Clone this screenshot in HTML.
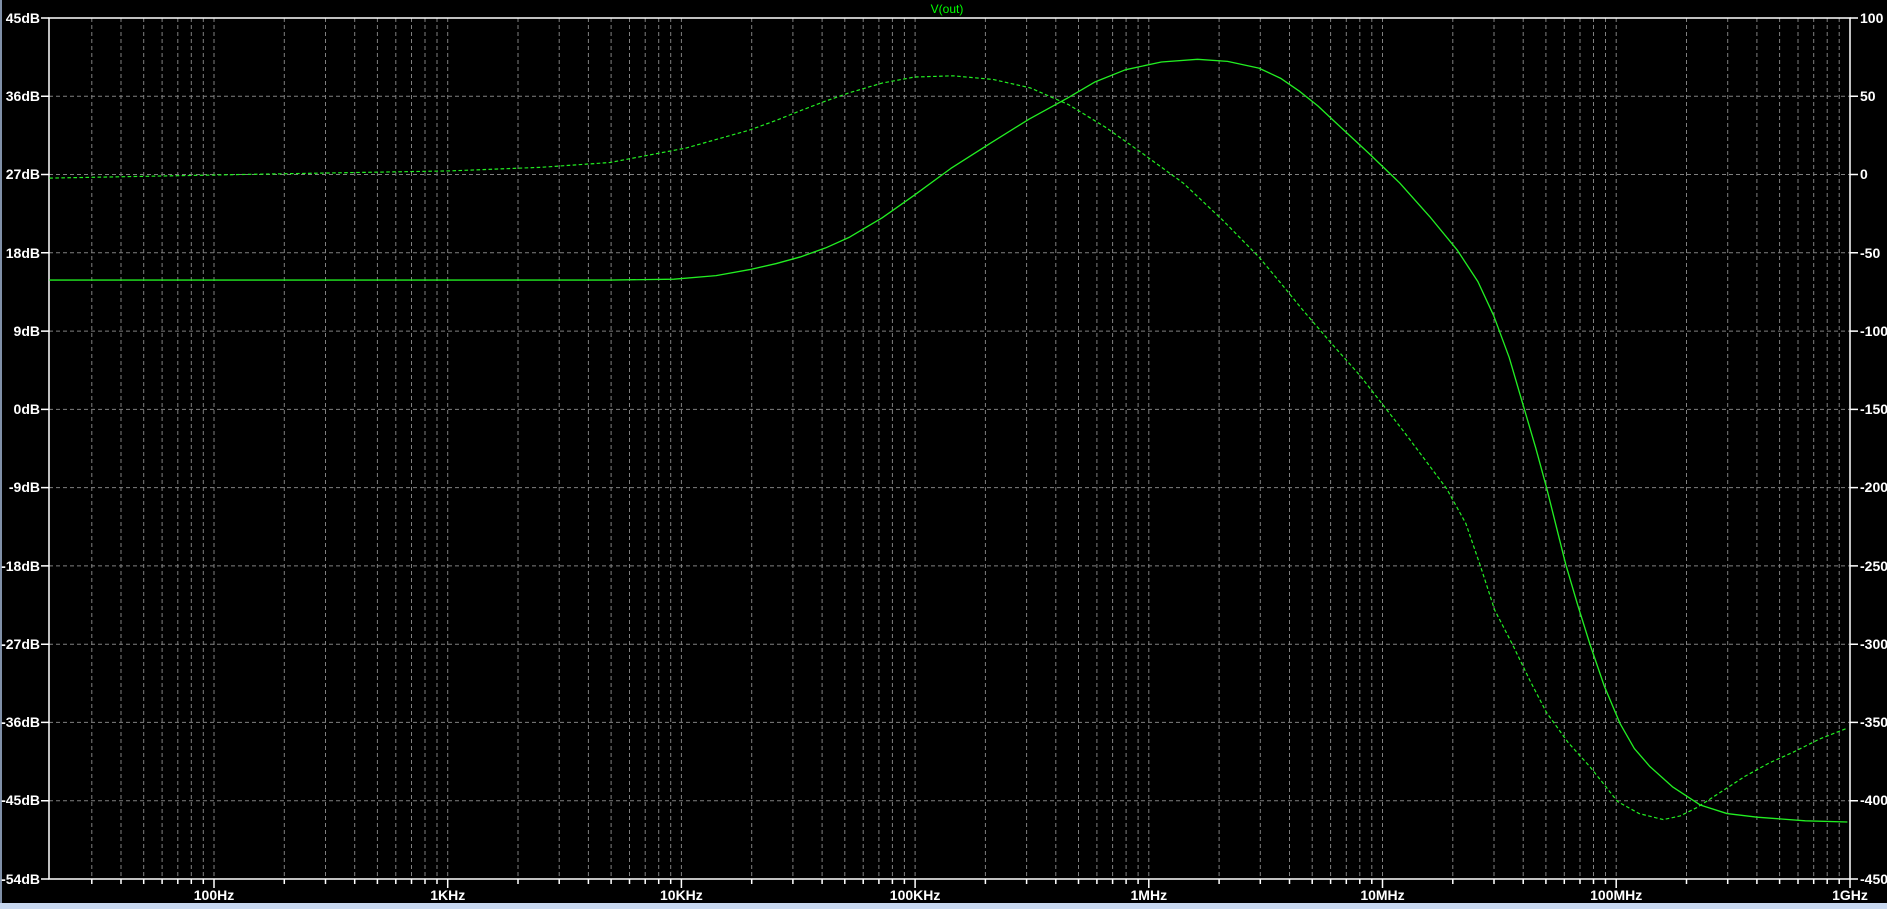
<!DOCTYPE html>
<html><head><meta charset="utf-8"><style>
html,body{margin:0;padding:0;background:#000;width:1887px;height:909px;overflow:hidden}
svg{display:block}
text{font-family:"Liberation Sans",sans-serif;font-weight:bold;font-size:14px;fill:#fff}
</style></head><body>
<svg width="1887" height="909" viewBox="0 0 1887 909" xmlns="http://www.w3.org/2000/svg">
<rect width="1887" height="909" fill="#000"/>
<rect x="0" y="0" width="2" height="909" fill="#8090a8"/>
<rect x="0" y="903" width="1887" height="6" fill="#c8d8f0"/>
<g stroke="#808080" stroke-width="1" stroke-dasharray="4,3" fill="none">
<path d="M49 96.3H1850M49 174.5H1850M49 252.8H1850M49 331.1H1850M49 409.4H1850M49 487.6H1850M49 565.9H1850M49 644.2H1850M49 722.4H1850M49 800.7H1850"/>
<path d="M91.8 18V879M121 18V879M143.7 18V879M162.1 18V879M177.8 18V879M191.3 18V879M203.3 18V879
M214 18V879M284.3 18V879M325.5 18V879M354.7 18V879M377.4 18V879M395.8 18V879M411.5 18V879M425 18V879M437 18V879
M447.7 18V879M518 18V879M559.2 18V879M588.4 18V879M611.1 18V879M629.5 18V879M645.2 18V879M658.7 18V879M670.7 18V879
M681.4 18V879M751.7 18V879M792.9 18V879M822.1 18V879M844.8 18V879M863.2 18V879M878.9 18V879M892.4 18V879M904.4 18V879
M915.1 18V879M985.4 18V879M1026.6 18V879M1055.8 18V879M1078.5 18V879M1096.9 18V879M1112.6 18V879M1126.1 18V879M1138.1 18V879
M1148.8 18V879M1219.1 18V879M1260.3 18V879M1289.5 18V879M1312.2 18V879M1330.6 18V879M1346.3 18V879M1359.8 18V879M1371.8 18V879
M1382.5 18V879M1452.8 18V879M1494 18V879M1523.2 18V879M1545.9 18V879M1564.3 18V879M1580 18V879M1593.5 18V879M1605.5 18V879
M1616.2 18V879M1686.5 18V879M1727.7 18V879M1756.9 18V879M1779.6 18V879M1798 18V879M1813.7 18V879M1827.2 18V879M1839.2 18V879"/>
</g>
<g stroke="#fff" stroke-width="1.5" fill="none">
<path d="M49 18H1850V879H49Z"/>
<path d="M41 18H49M41 96.3H49M41 174.5H49M41 252.8H49M41 331.1H49M41 409.4H49M41 487.6H49M41 565.9H49M41 644.2H49M41 722.4H49M41 800.7H49M41 879H49"/>
<path d="M1850 18H1858M1850 96.3H1858M1850 174.5H1858M1850 252.8H1858M1850 331.1H1858M1850 409.4H1858M1850 487.6H1858M1850 565.9H1858M1850 644.2H1858M1850 722.4H1858M1850 800.7H1858M1850 879H1858"/>
<path d="M214 879v9M447.7 879v9M681.4 879v9M915.1 879v9M1148.8 879v9M1382.5 879v9M1616.2 879v9M1850 879v9"/>
<path d="M91.8 879v5M121 879v5M143.7 879v5M162.1 879v5M177.8 879v5M191.3 879v5M203.3 879v5M284.3 879v5M325.5 879v5M354.7 879v5M377.4 879v5M395.8 879v5M411.5 879v5M425 879v5M437 879v5M518 879v5M559.2 879v5M588.4 879v5M611.1 879v5M629.5 879v5M645.2 879v5M658.7 879v5M670.7 879v5M751.7 879v5M792.9 879v5M822.1 879v5M844.8 879v5M863.2 879v5M878.9 879v5M892.4 879v5M904.4 879v5M985.4 879v5M1026.6 879v5M1055.8 879v5M1078.5 879v5M1096.9 879v5M1112.6 879v5M1126.1 879v5M1138.1 879v5M1219.1 879v5M1260.3 879v5M1289.5 879v5M1312.2 879v5M1330.6 879v5M1346.3 879v5M1359.8 879v5M1371.8 879v5M1452.8 879v5M1494 879v5M1523.2 879v5M1545.9 879v5M1564.3 879v5M1580 879v5M1593.5 879v5M1605.5 879v5M1686.5 879v5M1727.7 879v5M1756.9 879v5M1779.6 879v5M1798 879v5M1813.7 879v5M1827.2 879v5M1839.2 879v5"/>
</g>
<g text-anchor="end">
<text x="40" y="23">45dB</text><text x="40" y="101">36dB</text><text x="40" y="179">27dB</text><text x="40" y="258">18dB</text>
<text x="40" y="336">9dB</text><text x="40" y="414">0dB</text><text x="40" y="492">-9dB</text><text x="40" y="571">-18dB</text>
<text x="40" y="649">-27dB</text><text x="40" y="727">-36dB</text><text x="40" y="805">-45dB</text><text x="40" y="884">-54dB</text>
</g>
<g>
<text x="1860" y="23">100</text><text x="1860" y="101">50</text><text x="1860" y="179">0</text><text x="1860" y="258">-50</text>
<text x="1860" y="336">-100</text><text x="1860" y="414">-150</text><text x="1860" y="492">-200</text><text x="1860" y="571">-250</text>
<text x="1860" y="649">-300</text><text x="1860" y="727">-350</text><text x="1860" y="805">-400</text><text x="1860" y="884">-450</text>
</g>
<g text-anchor="middle">
<text x="214" y="900">100Hz</text><text x="447.7" y="900">1KHz</text><text x="681.4" y="900">10KHz</text><text x="915.1" y="900">100KHz</text>
<text x="1148.8" y="900">1MHz</text><text x="1382.5" y="900">10MHz</text><text x="1616.2" y="900">100MHz</text><text x="1850" y="900">1GHz</text>
</g>
<text x="947" y="13" text-anchor="middle" style="fill:#00ff00;font-weight:normal;font-size:12px">V(out)</text>
<g transform="scale(1.2035)" fill="none" stroke="#22ee22" stroke-linejoin="round">
<polyline stroke-width="1.1" points="41,232.7 507,232.7 560,232 595,229 623,224 645,219 665,213.5 686,206 706,197 733,181 760,162 790,140 823,119 855,99 887,81.5 910,68 935,58 965,51.5 995,49.3 1020,51 1046,56.6 1064,65 1080,76 1095,88 1110,102 1137,127 1163,152 1188,180 1211,208 1228,234 1241,262 1254,297 1266,338 1276,372 1285,405 1293,437 1301,469 1311,503 1321,535 1333,570 1346,601 1358,622 1371,637 1390,654 1413,669 1435,676 1460,679 1500,682 1535,683"/>
<polyline stroke-width="1" stroke-dasharray="3,2" points="41,148 200,145 374,142 450,139 507,135 570,123 623,108 645,100 665,92 686,84 706,77 733,69 760,64 792,63 825,66 856,73 888,87 919,106 950,128 983,152 1015,182 1046,213.5 1064,235 1082,257 1106,285 1130,312 1166,358 1202,406 1218,435 1230,470 1242,507 1257,536 1271,565 1285,592 1303,617 1321,637 1333,652 1344,666 1362,676 1382,681 1396,678 1410,671 1430,658 1450,645 1470,634 1490,625 1512,614 1535,605"/>
</g>
</svg>
</body></html>
